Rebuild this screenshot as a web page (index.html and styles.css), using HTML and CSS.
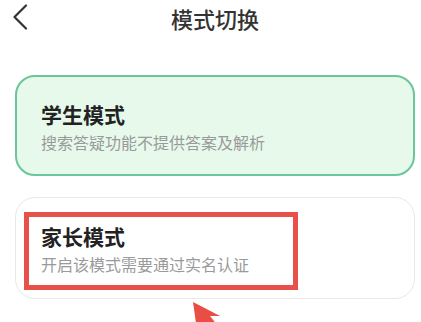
FILE: index.html
```html
<!DOCTYPE html>
<html lang="zh-CN">

<head>
    <meta charset="UTF-8">
    <meta name="viewport" content="width=device-width, initial-scale=1.0">
    <title>模式切换</title>
    <link rel="stylesheet" href="styles.css">
</head>

<body>
    <header class="top-bar">
        <button class="back-btn" aria-label="返回">
            <svg width="16" height="26" viewBox="0 0 16 26">
                <path d="M14 1.5 L2.5 13 L14 24.5" fill="none" stroke="#333" stroke-width="2.2" stroke-linecap="round" stroke-linejoin="round"/>
            </svg>
        </button>
        <h1>模式切换</h1>
    </header>

    <div class="modes">
        <div class="mode-card active">
            <div class="mode-title">学生模式</div>
            <div class="mode-desc">搜索答疑功能不提供答案及解析</div>
        </div>
        <div class="mode-card">
            <div class="highlight"></div>
            <div class="mode-title">家长模式</div>
            <div class="mode-desc">开启该模式需要通过实名认证</div>
        </div>
    </div>

    <!-- annotation arrow -->
    <svg class="pointer" width="40" height="30" viewBox="0 0 40 30">
        <polygon points="3,2 30,16 20,16 36,36 24,40 12,22 7,30" fill="#ea4d43"/>
    </svg>
</body>

</html>
```

FILE: styles.css
```css
body {
    font-family: "Noto Sans CJK SC", "Noto Sans", sans-serif;
    background-color: #ffffff;
    margin: 0;
    padding: 0;
    position: relative;
    height: 322px;
    overflow: hidden;
}

.top-bar {
    display: flex;
    align-items: center;
    justify-content: center;
    height: 36px;
    position: relative;
}

.top-bar h1 {
    margin: 0;
    padding-left: 9px;
    font-size: 22px;
    line-height: 26px;
    font-weight: 500;
    color: #333;
}

.back-btn {
    position: absolute;
    left: 12px;
    top: 4px;
    background: none;
    border: none;
    padding: 0;
    display: flex;
}

.modes {
    display: flex;
    flex-direction: column;
    gap: 21px;
    padding: 39px 6px 0 15px;
}

.mode-card {
    position: relative;
    box-sizing: border-box;
    height: 102px;
    padding: 25px 24px 0 25px;
    border: 1px solid #e8e8e8;
    border-radius: 20px;
    background-color: #fff;
}

.mode-card.active {
    height: 101px;
    padding: 24px 24px 0 24px;
    border: 2px solid #6bc69b;
    background-color: #e6f9eb;
}

.mode-title {
    font-size: 21px;
    line-height: 26px;
    font-weight: 700;
    color: #222;
}

.mode-desc {
    margin-top: 5px;
    font-size: 16px;
    line-height: 20px;
    color: #9a9a9a;
}

.highlight {
    position: absolute;
    left: 8px;
    top: 14px;
    width: 264px;
    height: 68px;
    border: 5px solid #e8504a;
}

.pointer {
    position: absolute;
    left: 190px;
    top: 300px;
}
```
